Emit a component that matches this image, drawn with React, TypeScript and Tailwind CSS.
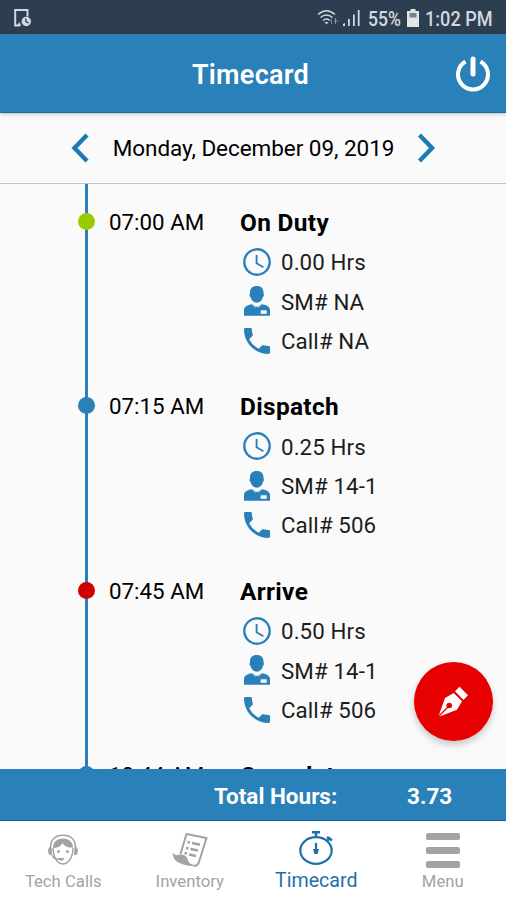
import { type ReactNode } from 'react';

type Entry = {
  time: string;
  title: string;
  dot: string;
  hours: string;
  sm: string;
  call: string;
};

const entries: Entry[] = [
  { time: '07:00 AM', title: 'On Duty', dot: 'bg-[#99cc00]', hours: '0.00', sm: 'NA', call: 'NA' },
  { time: '07:15 AM', title: 'Dispatch', dot: 'bg-[#2a80b9]', hours: '0.25', sm: '14-1', call: '506' },
  { time: '07:45 AM', title: 'Arrive', dot: 'bg-[#d00000]', hours: '0.50', sm: '14-1', call: '506' },
  { time: '10:44 AM', title: 'Complete', dot: 'bg-[#2a80b9]', hours: '2.98', sm: '14-1', call: '506' },
];

export default function App() {
  return (
    <div className="flex h-[900px] w-[506px] flex-col overflow-hidden bg-[#fafafa] font-['Roboto',sans-serif] text-black">
      <StatusBar />
      <header className="z-10 grid h-[79px] shrink-0 grid-cols-[1fr_auto_1fr] items-center border-b border-[#1a6da5] bg-[#2a80b9] px-[15px] shadow-[0_1px_4px_rgba(0,0,0,0.25)]">
        <span />
        <h1 className="mt-[5px] mr-[5px] text-[27px] leading-none font-semibold tracking-[0.3px] text-white">Timecard</h1>
        <button type="button" aria-label="Log out" className="mt-px justify-self-end">
          <PowerIcon />
        </button>
      </header>
      <div className="flex h-[71px] shrink-0 items-center border-b border-[#c4c4c4] pl-[71px]">
        <button type="button" aria-label="Previous day">
          <ChevronIcon d="M16 2 3.500 15 16 28" />
        </button>
        <span className="w-[327px] pt-[2px] text-center text-[22.500px] tracking-[-0.05px] whitespace-nowrap">
          Monday, December 09, 2019
        </span>
        <button type="button" aria-label="Next day">
          <ChevronIcon d="M2.500 2 15 15 2.500 28" />
        </button>
      </div>
      <main className="min-h-0 flex-1 overflow-hidden">
        {entries.map((entry) => (
          <TimelineEntry key={entry.time} entry={entry} />
        ))}
      </main>
      <div className="flex h-[52px] shrink-0 items-center border-b border-[#14649c] bg-[#2a80b9] pt-[4px] pl-[214px] text-[22.500px] leading-none font-bold text-white">
        <span className="w-[193px]">Total Hours:</span>
        <span>3.73</span>
      </div>
      <nav className="grid h-[79px] shrink-0 grid-cols-4 bg-white text-[#a3a3a3]">
        <Tab label="Tech Calls" icon={<AgentIcon />} />
        <Tab label="Inventory" icon={<ListIcon />} />
        <Tab label="Timecard" icon={<StopwatchIcon />} active />
        <Tab label="Menu" icon={<MenuIcon />} />
      </nav>
      <button
        type="button"
        aria-label="Sign timecard"
        className="absolute top-[662px] left-[414px] flex size-[79px] items-center justify-center rounded-full bg-[#e60000] shadow-[0_4px_7px_rgba(0,0,0,0.2)]"
      >
        <PenIcon />
      </button>
    </div>
  );
}

function StatusBar() {
  return (
    <div className="flex h-[34px] shrink-0 items-center bg-[#2c3e50] pr-[13px] pl-[13px] text-[19.500px] text-[#d3d8dd]">
      <svg className="mt-px" width="19" height="20" viewBox="0 0 19 20" fill="none">
        <path d="M6.500 17.500H2.200V2H14.500V8.500" stroke="currentColor" strokeWidth="2" />
        <path d="m6.500 14 1.500 4H3.500Z" fill="currentColor" />
        <circle cx="13.300" cy="13.500" r="4.700" fill="currentColor" />
        <path d="M12.800 10.500v3l2.700 1.300" stroke="#2c3e50" strokeWidth="1.300" />
      </svg>
      <svg className="mt-[2px] ml-auto" width="22" height="18" viewBox="0 0 22 18" fill="none" stroke="currentColor" strokeWidth="1.500">
        <path d="M1 5.500Q9.500-2 18 5.500M3.500 8.500q6-5 12 0M6 11.500q3.500-2.800 7 0" />
        <path d="m7.500 13 2 2.500 2-2.500Z" fill="currentColor" stroke="none" />
        <path d="M14.500 10v5M18.500 9v6M17 12h4" strokeWidth="1" opacity=".5" />
      </svg>
      <svg className="mt-[2px] ml-1" width="18" height="18" viewBox="0 0 18 18" fill="currentColor">
        <path d="M0 17v-2l2-1v3ZM5 10h1.800v7H5ZM10 5.500h1.800V17H10ZM14.800 1h1.800v16h-1.800Z" />
      </svg>
      <span className="ml-[7px] w-[32px] origin-left scale-x-[0.9] pt-[5px] font-medium">55%</span>
      <svg className="mt-[2px] ml-[7px]" width="12" height="18" viewBox="0 0 12 18">
        <path d="M3.500 0h5v2H12v16H0V2h3.500Z" fill="#e2e5e8" />
        <path d="M2.500 4h7v4.500h-7Z" fill="#76818c" />
      </svg>
      <span className="ml-[6px] w-[68px] origin-left scale-x-[0.93] pt-[5px] font-medium whitespace-nowrap">1:02 PM</span>
    </div>
  );
}

function TimelineEntry({ entry }: { entry: Entry }) {
  return (
    <section className="relative flex h-[184.500px] pt-[19px] text-[22.300px]">
      <div className="absolute top-0 bottom-0 left-[85px] w-[3px] bg-[#2a80b9]" />
      <div className={`absolute top-[28.500px] left-[77.500px] size-[17px] rounded-full ${entry.dot}`} />
      <time className="flex h-[39.300px] w-[240px] shrink-0 items-center pl-[109px] tracking-[0.02px]">{entry.time}</time>
      <div>
        <h2 className="flex h-[39.300px] items-center pt-px text-[24.400px] leading-none font-bold tracking-[0.350px]">
          {entry.title}
        </h2>
        <Detail icon={<ClockIcon />}>{entry.hours} Hrs</Detail>
        <Detail icon={<PersonIcon />}>SM# {entry.sm}</Detail>
        <Detail icon={<PhoneIcon />}>Call# {entry.call}</Detail>
      </div>
    </section>
  );
}

function Detail({ icon, children }: { icon: ReactNode; children: ReactNode }) {
  return (
    <div className="flex h-[39.300px] items-center text-[#1c1c1c]">
      <span className="flex w-[41px] pl-[2px] text-[#2a80b9]">{icon}</span>
      <span className="pt-[2px] tracking-[0.1px] whitespace-nowrap">{children}</span>
    </div>
  );
}

function Tab({ label, icon, active }: { label: string; icon: ReactNode; active?: boolean }) {
  return (
    <button type="button" className={active ? 'flex flex-col items-center text-[#1c72a8]' : 'flex flex-col items-center'}>
      <span className="flex h-[50px] items-center pt-[6px]">{icon}</span>
      <span className={active ? 'text-[19.600px] leading-[20px]' : 'text-[16.700px] leading-[22px]'}>{label}</span>
    </button>
  );
}

function ChevronIcon({ d }: { d: string }) {
  return (
    <svg width="19" height="30" viewBox="0 0 19 30" fill="none" stroke="#1b7cb5" strokeWidth="4.400">
      <path d={d} />
    </svg>
  );
}

function PowerIcon() {
  return (
    <svg width="36" height="36" viewBox="0 0 36 36" fill="none" stroke="white" strokeWidth="4">
      <path d="M10.500 5.500A15 15 0 1 0 25.500 5.500" />
      <path d="M18 3v15" strokeWidth="5" strokeLinecap="round" />
    </svg>
  );
}

function ClockIcon() {
  return (
    <svg className="ml-px" width="28" height="28" viewBox="0 0 28 28" fill="none" stroke="currentColor" strokeWidth="2.400">
      <circle cx="14" cy="14" r="12.700" />
      <path d="M13.600 7v8.300l6.800 3.900" strokeWidth="1.900" />
    </svg>
  );
}

function PersonIcon() {
  return (
    <svg className="ml-px" width="28" height="30" viewBox="0 0 27 30" fill="currentColor">
      <path d="M13.300 0c4.800 0 7 3 6.700 7.500.8.700.5 2.400-.5 3.500-1 3.800-3.400 5.700-6.200 5.700S8 14.800 7 11c-1-1.100-1.300-2.800-.5-3.500C6.200 3 8.500 0 13.300 0Z" />
      <path d="M9 18.200C3.500 19 .5 20.500.5 24.500v5.300h26v-5.300c0-4-3-5.500-8.500-6.300l-3.500 2.300h-2.200Z" />
      <path d="m9 18.500 3 2.700 1.400-1.500 1.400 1.500 3-2.700" fill="none" stroke="#fafafa" strokeWidth=".8" />
      <path d="M17.200 24.300h6v3.500h-6Z" fill="#fafafa" />
    </svg>
  );
}

function PhoneIcon() {
  return (
    <svg className="ml-[2px]" width="26" height="26" viewBox="3 3 18 18" fill="currentColor">
      <path d="M3 4c0-.550.450-1 1-1h3.500c.550 0 1 .450 1 1 0 1.250.2 2.450.57 3.570.11.350.03.740-.25 1.020l-2.200 2.200a15.050 15.050 0 0 0 6.590 6.590l2.200-2.200c.27-.270.67-.360 1.020-.240 1.120.37 2.330.57 3.570.57.550 0 1 .450 1 1V20c0 .550-.450 1-1 1C10.610 21 3 13.390 3 4Z" />
    </svg>
  );
}

function PenIcon() {
  return (
    <svg width="31" height="31" viewBox="0 0 31 31" fill="white">
      <path d="M21.500.8 30 9.300l-4.500 4.600L17 5.300Z" />
      <path d="m15.700 7 8.300 8.300-5 8.500L1.500 30.500l-.8-.8L7 12Z" />
      <path d="m1 30 9-9" stroke="#e60000" strokeWidth="1.200" />
      <circle cx="11.200" cy="19.500" r="2.800" fill="#e60000" />
    </svg>
  );
}

function AgentIcon() {
  return (
    <svg className="mt-[2px]" width="32" height="32" viewBox="0 0 32 32" fill="none" stroke="currentColor" strokeWidth="1.500">
      <path d="M3.500 13C4 5 8.500 1.200 16 1.200S28 5 28.500 13" />
      <path d="M6 14C6 8 10 4.500 16 4.500S26 8 26 14l-1.500-.5c-5 0-7.500-2-9-4.500-1 2.500-3.500 4.500-8 5Z" fill="currentColor" stroke="none" />
      <path d="M4.500 13H3c-2.500 1-2.500 7 0 8h2ZM27.500 13H29c2.500 1 2.500 7 0 8h-2Z" fill="currentColor" stroke="none" />
      <path d="M6 14c0 7 1.500 10.500 5 14q5 4 10 0c3.500-3.500 5-7 5-14" />
      <path d="M5 21c1 3 4 4.500 8 4" strokeWidth="1.200" />
      <path d="M11 24h6c0 3-4 4-6 0Z" fill="currentColor" stroke="none" />
      <circle cx="11.500" cy="17.500" r="1.500" fill="currentColor" stroke="none" />
      <circle cx="20.500" cy="17.500" r="1.500" fill="currentColor" stroke="none" />
    </svg>
  );
}

function ListIcon() {
  return (
    <svg className="mt-[2px]" width="36" height="34" viewBox="0 0 36 34" fill="none" stroke="currentColor" strokeWidth="2">
      <path d="M8.500 21 14.500 1l20 4-7.500 24c-1 3-3 4.200-5.500 3.500" />
      <path d="M1 20.500c2 3 5 1.500 8 1.500s5 1 6 4 2 5 6.500 6.500c-5 0-10-1-15-3.500S2 23.500 1 20.500Z" fill="currentColor" strokeWidth="1" />
      <path d="m20 10 8 1.700M18.500 16l7.500 1.500M17 21.500l7 1.500" strokeWidth="2.600" />
      <path d="m15.500 9 2.500.5M14 15l2.500.5M12.500 20l2.500.5" strokeWidth="2.600" />
    </svg>
  );
}

function StopwatchIcon() {
  return (
    <svg className="-mt-[3px]" width="34" height="34" viewBox="0 0 34 34" fill="none" stroke="currentColor" strokeWidth="2.200">
      <ellipse cx="17" cy="19.500" rx="15.700" ry="13.300" />
      <path d="M13 1.300h8M17 1v5M28 10l3.500-3.500M28 6l5 3.500" strokeWidth="2.400" />
      <path d="M17 12v9" />
      <path d="M14 18h6l-1.500 5h-3Z" fill="currentColor" stroke="none" />
    </svg>
  );
}

function MenuIcon() {
  return (
    <svg className="mt-[2px]" width="34" height="35" viewBox="0 0 34 35" fill="currentColor">
      <rect width="34" height="7" rx="2" />
      <rect y="14" width="34" height="7" rx="2" />
      <rect y="28" width="34" height="7" rx="2" />
    </svg>
  );
}
